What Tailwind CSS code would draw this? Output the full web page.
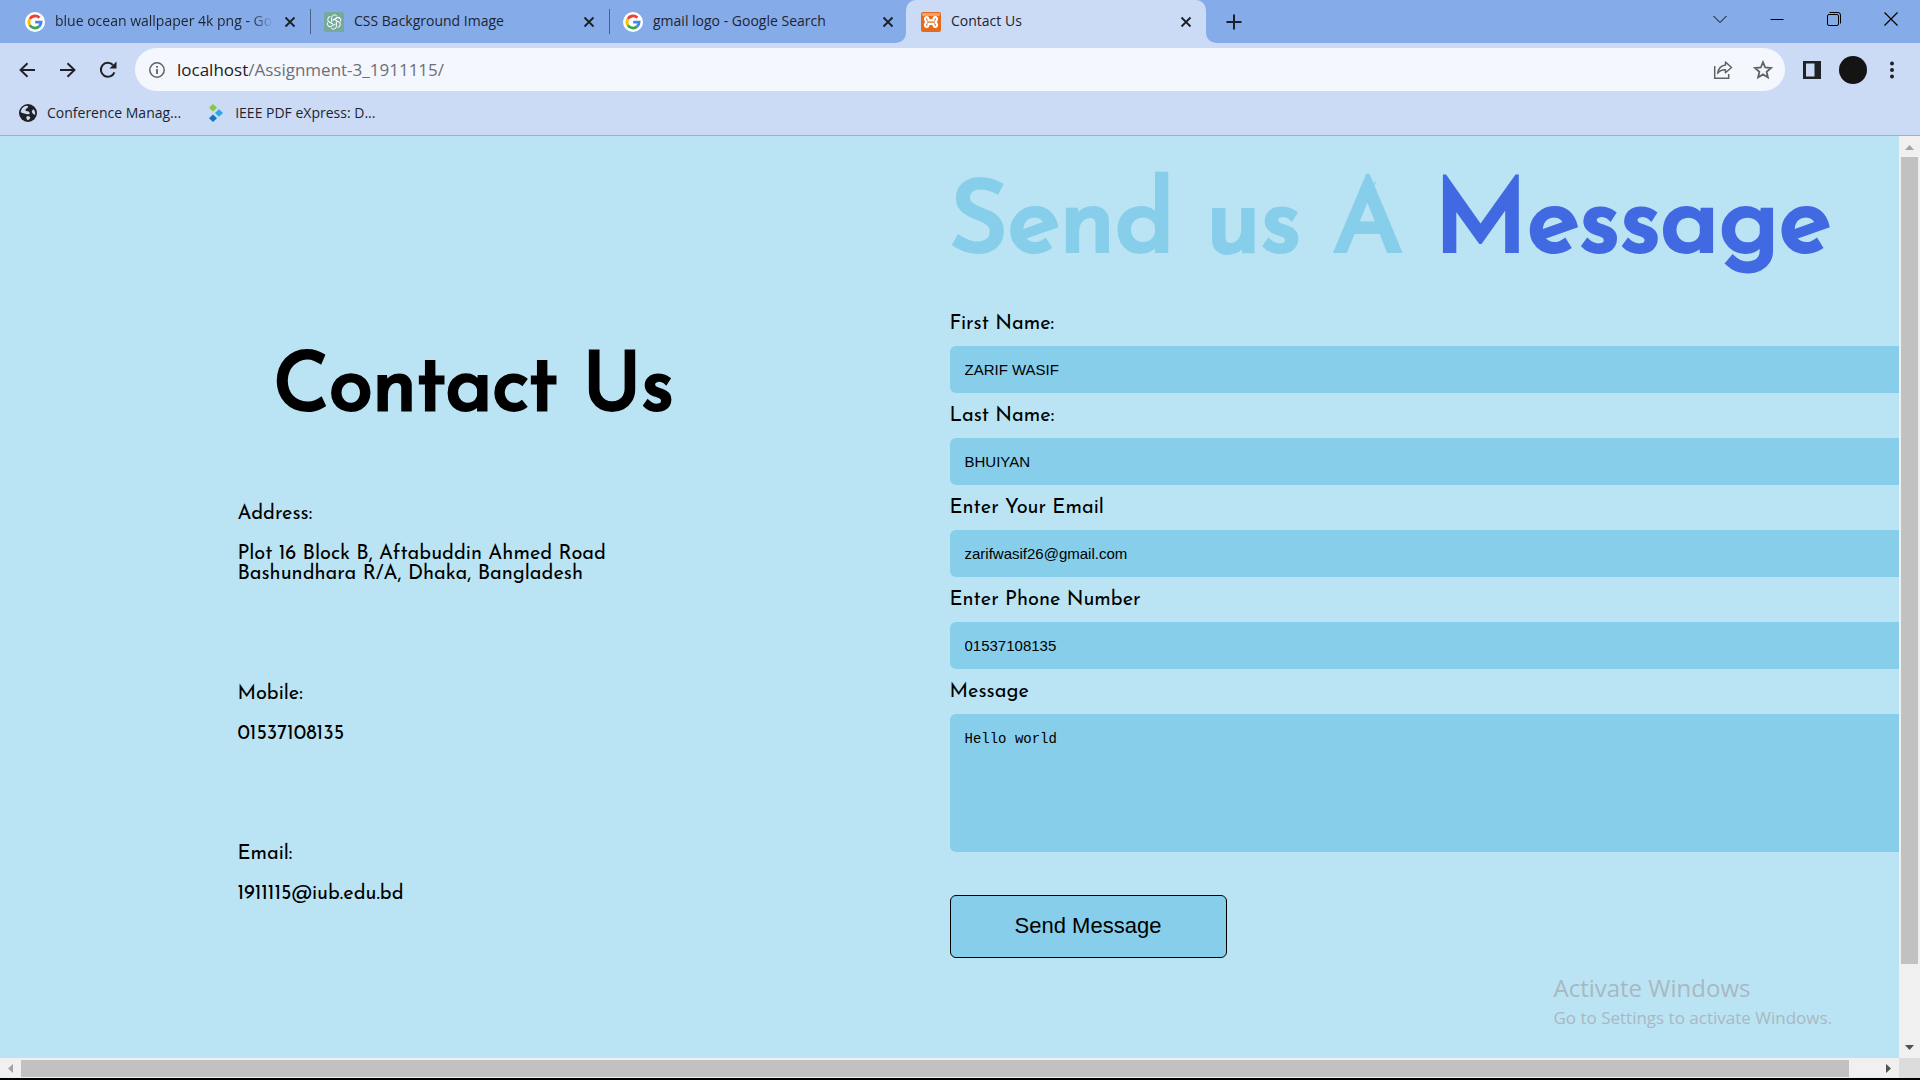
<!DOCTYPE html>
<html lang="en">
<head>
<meta charset="utf-8">
<meta name="viewport" content="width=device-width, initial-scale=1">
<title>Contact Us</title>
<script src="https://cdn.jsdelivr.net/npm/@tailwindcss/browser@4"></script>
</head>
<body class="flex h-screen flex-col overflow-hidden bg-black pb-0.5 font-['Open_Sans',sans-serif] text-[#1d2430]">
<svg class="hidden" aria-hidden="true">
  <symbol id="google" viewBox="0 0 20 20">
    <circle cx="10" cy="10" r="10" fill="#fff"/>
    <g fill="none" stroke-width="2.8">
      <path d="M14.4 5.8A6.1 6.1 0 0 0 4.8 6.9" stroke="#ea4335"/>
      <path d="M4.8 6.9A6.1 6.1 0 0 0 4.8 13.1" stroke="#fbbc05"/>
      <path d="M4.8 13.1A6.1 6.1 0 0 0 14 14.6" stroke="#34a853"/>
      <path d="M14 14.6A6.1 6.1 0 0 0 16.1 10.2H10.2" stroke="#4285f4"/>
    </g>
  </symbol>
  <symbol id="close" viewBox="0 0 12 12">
    <path d="M1.5 1.5l9 9M10.5 1.5l-9 9" stroke="#1d1f24" stroke-width="1.8" fill="none"/>
  </symbol>
</svg>

<header class="flex-none bg-[#cbdbf6]">
  <div class="flex h-[43px] bg-[#85abe9] pl-[11px] text-sm">
    <div class="flex w-[299px] items-center pl-3.5 pr-3.5">
      <svg class="size-5 flex-none"><use href="#google"/></svg>
      <span class="ml-2.5 w-[218px] flex-none overflow-hidden whitespace-nowrap mask-r-from-90% pb-0.5">blue ocean wallpaper 4k png - Google Search</span>
      <button class="ml-auto" aria-label="Close tab"><svg class="size-3"><use href="#close"/></svg></button>
    </div>
    <div class="relative flex w-[299px] items-center self-stretch pl-3.5 pr-3.5 before:absolute before:left-0 before:h-[25px] before:w-px before:bg-[#4c6187]">
      <svg class="size-5 flex-none" viewBox="0 0 20 20"><path d="M2 0h16a2 2 0 0 1 2 2v18H2a2 2 0 0 1-2-2V2a2 2 0 0 1 2-2z" fill="#75a99a"/>
        <g fill="none" stroke="#fff" stroke-width="1">
          <path d="M7.600 10.400V5.800a2.900 2.900 0 0 1 5.300-1.600M9 8.300l4.200-2.400a2.900 2.900 0 0 1 3 .3"/>
          <path d="M7.600 10.400V5.800a2.900 2.900 0 0 1 5.300-1.600" transform="rotate(60 10 10)"/>
          <path d="M7.600 10.400V5.800a2.900 2.900 0 0 1 5.300-1.600" transform="rotate(120 10 10)"/>
          <path d="M7.600 10.400V5.800a2.900 2.900 0 0 1 5.300-1.600" transform="rotate(180 10 10)"/>
          <path d="M7.600 10.400V5.800a2.900 2.900 0 0 1 5.300-1.600" transform="rotate(240 10 10)"/>
          <path d="M7.600 10.400V5.800a2.900 2.900 0 0 1 5.300-1.600" transform="rotate(300 10 10)"/>
        </g></svg>
      <span class="ml-2.5 pb-0.5">CSS Background Image</span>
      <button class="ml-auto" aria-label="Close tab"><svg class="size-3"><use href="#close"/></svg></button>
    </div>
    <div class="relative flex w-[297px] items-center pl-3.5 pr-3 before:absolute before:left-0 before:h-[25px] before:w-px before:bg-[#4c6187]">
      <svg class="size-5 flex-none"><use href="#google"/></svg>
      <span class="ml-2.5 pb-0.5">gmail logo - Google Search</span>
      <button class="ml-auto" aria-label="Close tab"><svg class="size-3"><use href="#close"/></svg></button>
      <svg class="absolute bottom-0 right-0 size-2.5" viewBox="0 0 10 10"><path d="M10 0v10H0A10 10 0 0 0 10 0z" fill="#cbdbf6"/></svg>
    </div>
    <div class="relative flex w-[300px] items-center rounded-t-[10px] bg-[#cbdbf6] pl-[15px] pr-3.5">
      <svg class="size-5 flex-none" viewBox="0 0 20 20"><rect width="20" height="20" rx="2" fill="#e66a1c"/><rect x="1" y="1" width="18" height="3" rx="1" fill="#f2a067"/>
        <path d="M7.600 8.400C7.600 3.600 3.600 4.600 4 7.400C4.200 8.900 5.400 9 5.400 10C5.400 11 4.200 11.100 4 12.600C3.600 15.400 7.600 16.400 7.600 11.800H12.400C12.400 16.400 16.400 15.400 16 12.600C15.800 11.100 14.600 11 14.600 10C14.600 9 15.800 8.900 16 7.400C16.400 4.600 12.400 3.600 12.400 8.400z" fill="none" stroke="#fff" stroke-width="2.200" stroke-linejoin="round"/></svg>
      <span class="ml-2.5 pb-0.5">Contact Us</span>
      <button class="ml-auto" aria-label="Close tab"><svg class="size-3"><use href="#close"/></svg></button>
      <svg class="absolute -right-2.5 bottom-0 size-2.5" viewBox="0 0 10 10"><path d="M0 0v10h10A10 10 0 0 1 0 0z" fill="#cbdbf6"/></svg>
    </div>
    <button class="ml-5 self-center" aria-label="New tab"><svg class="size-4" viewBox="0 0 16 16"><path d="M8 .5v15M.5 8h15" stroke="#1d1f24" stroke-width="2"/></svg></button>
    <div class="mr-px ml-auto flex h-[37px] items-center text-black">
      <button class="flex w-[57px] justify-center" aria-label="Search tabs"><svg class="size-3.5" viewBox="0 0 14 14"><path d="M.5 4L7 10.5 13.5 4" fill="none" stroke="currentColor"/></svg></button>
      <button class="flex w-[57px] justify-center" aria-label="Minimize"><svg class="size-3.5" viewBox="0 0 14 14"><path d="M.5 7.500h13" stroke="currentColor"/></svg></button>
      <button class="flex w-[57px] justify-center" aria-label="Restore"><svg class="size-3.5" viewBox="0 0 14 14"><g fill="none" stroke="currentColor"><rect x=".5" y="2.500" width="11" height="11" rx="1.500"/><path d="M2.500 .5H11a2.500 2.500 0 0 1 2.500 2.500v8.500"/></g></svg></button>
      <button class="flex w-[57px] justify-center" aria-label="Close"><svg class="size-3.5" viewBox="0 0 14 14"><path d="M.5 .5l13 13M13.500 .5l-13 13" stroke="currentColor" stroke-width="1.200"/></svg></button>
    </div>
  </div>

  <div class="mt-[5px] flex h-[43px] items-center pl-[18px] text-[#202124]">
    <button class="mr-5" aria-label="Back"><svg class="size-5" viewBox="0 0 20 20"><path d="M17 10H3M9.500 3.200L2.500 10l7 6.800" fill="none" stroke="currentColor" stroke-width="1.900"/></svg></button>
    <button class="mr-5" aria-label="Forward"><svg class="size-5" viewBox="0 0 20 20"><path d="M2 10h14M9.500 3.200l7 6.800-7 6.800" fill="none" stroke="currentColor" stroke-width="1.900"/></svg></button>
    <button class="mr-[17px]" aria-label="Reload"><svg class="size-5" viewBox="0 0 20 20"><path d="M16.400 12.300A7 7 0 1 1 15 5" fill="none" stroke="currentColor" stroke-width="2"/><path d="M18.500 1.500v7h-7z" fill="currentColor"/></svg></button>
    <div class="relative flex h-full flex-1 items-center rounded-full bg-[#f4f7fd] pl-3.5 pr-3">
      <svg class="size-4 flex-none" viewBox="0 0 16 16"><circle cx="8" cy="8" r="7.200" fill="none" stroke="#5f6368" stroke-width="1.500"/><path d="M8 7v5M8 4v1.800" stroke="#5f6368" stroke-width="1.800"/></svg>
      <a href="#" class="ml-3 text-[17px] text-[#6b7079]"><span class="text-[#202124]">localhost</span>/Assignment-3_1911115/</a>
      <button class="ml-auto mr-5 text-[#5f6368]" aria-label="Share"><svg class="size-5" viewBox="0 0 20 20"><path d="M1.700 6v12.200h14V14" fill="none" stroke="currentColor" stroke-width="1.500"/><path d="M12.500 2l6 5.500-6 5.200V9.800c-3.500 0-6 1-7.800 3.600C5.200 9 7.800 5.700 12.500 5z" fill="none" stroke="currentColor" stroke-width="1.500" stroke-linejoin="round"/></svg></button>
      <button class="text-[#5f6368]" aria-label="Bookmark this tab"><svg class="size-5" viewBox="0 0 20 20"><path d="M10 2.200l2.200 5.300 5.800.5-4.400 3.800 1.300 5.600L10 14.400l-4.900 3L6.400 11.800 2 8l5.800-.5z" fill="none" stroke="currentColor" stroke-width="1.800"/></svg></button>
    </div>
    <button class="ml-[18px]" aria-label="Side panel"><svg class="size-[18px]" viewBox="0 0 18 18"><path d="M0 0h18v18H0zM3 2.500v13h8.500v-13z" fill="currentColor" fill-rule="evenodd"/></svg></button>
    <button class="ml-[18px] size-7 rounded-full bg-[#141414]" aria-label="Profile"></button>
    <button class="ml-[15px] mr-[18px]" aria-label="Menu"><svg class="h-[18px] w-5" viewBox="0 0 20 18"><g fill="currentColor"><circle cx="10" cy="2.500" r="2"/><circle cx="10" cy="9" r="2"/><circle cx="10" cy="15.500" r="2"/></g></svg></button>
  </div>

  <nav class="flex h-[45px] items-center border-b border-[#9fafcd] pl-[19px] text-sm" aria-label="Bookmarks">
    <a href="#" class="flex items-center">
      <svg class="mr-2.5 size-[18px]" viewBox="0 0 18 18"><circle cx="9" cy="9" r="9" fill="#202124"/><path d="M8 1.800c2 .2 1 1.800 0 2.400S6 5.500 6.500 6.600s3.500.4 4 1.800-.8 2.200-2 1.800S3.500 9.500 1.800 8.200C2 4.800 4.600 2 8 1.800zM14.500 5.200c1.300 1.600 2 3.600 1.600 5.400-1 .4-2.200-.8-3-2s.2-2.400 1.400-3.400zM8 12.300c1.400-.4 3 0 3.200 1.200s-1 2.200-2.600 2.700c-1-.8-2-3.200-.6-3.900z" fill="#cbdbf6"/></svg>
      <span>Conference Manag...</span>
    </a>
    <a href="#" class="ml-[27px] flex items-center">
      <svg class="mr-3 h-[18px] w-[15px]" viewBox="0 0 15 18"><path d="M5 0l4 3.700-4 3.700L1 3.700z" fill="#8bc53f"/><path d="M11 5.300L15 9l-4 3.700L7 9z" fill="#27aae1"/><path d="M5 10.600l4 3.700L5 18l-4-3.700z" fill="#0f75bc"/></svg>
      <span>IEEE PDF eXpress: D...</span>
    </a>
  </nav>
</header>

<div class="flex min-h-0 flex-1">
  <main class="relative grid min-w-0 flex-1 grid-cols-2 overflow-hidden bg-[#bae4f4] font-['Josefin_Sans',Lato,sans-serif] text-xl text-black">
    <section class="pl-[25%] pt-[206px]">
      <h1 class="pl-9 text-[80px] leading-[96px] font-normal [-webkit-text-stroke:3px]">Contact Us</h1>
      <dl class="mt-[66px] leading-5">
        <dt class="mb-5">Address:</dt>
        <dd class="mb-[100px]">Plot 16 Block B, Aftabuddin Ahmed Road<br>Bashundhara R/A, Dhaka, Bangladesh</dd>
        <dt class="mb-5">Mobile:</dt>
        <dd class="mb-[100px]">01537108135</dd>
        <dt class="mb-5">Email:</dt>
        <dd>1911115@iub.edu.bd</dd>
      </dl>
    </section>
    <section class="pt-[30px]">
      <h2 class="mb-[26px] text-[100px] leading-[120px] font-normal whitespace-nowrap text-[#87ceeb] [-webkit-text-stroke:4px]">Send us A <span class="text-[#4169e1]">Message</span></h2>
      <form class="flex w-[calc(100%+40px)] flex-col leading-6">
        <label for="first">First Name:</label>
        <input id="first" type="text" value="ZARIF WASIF" class="mt-2.5 mb-[11px] h-[47px] rounded-md bg-[#87ceeb] px-[15px] font-['Liberation_Sans',sans-serif] text-[15px]">
        <label for="last">Last Name:</label>
        <input id="last" type="text" value="BHUIYAN" class="mt-2.5 mb-[11px] h-[47px] rounded-md bg-[#87ceeb] px-[15px] font-['Liberation_Sans',sans-serif] text-[15px]">
        <label for="email">Enter Your Email</label>
        <input id="email" type="email" value="zarifwasif26@gmail.com" class="mt-2.5 mb-[11px] h-[47px] rounded-md bg-[#87ceeb] px-[15px] font-['Liberation_Sans',sans-serif] text-[15px]">
        <label for="phone">Enter Phone Number</label>
        <input id="phone" type="tel" value="01537108135" class="mt-2.5 mb-[11px] h-[47px] rounded-md bg-[#87ceeb] px-[15px] font-['Liberation_Sans',sans-serif] text-[15px]">
        <label for="message">Message</label>
        <textarea id="message" class="mt-2.5 h-[138px] resize-none rounded-md bg-[#87ceeb] px-[15px] py-[13px] font-['Liberation_Mono',monospace] text-sm leading-6">Hello world</textarea>
        <button type="button" class="mt-[43px] h-[63px] w-[277px] rounded-md border border-black bg-[#87ceeb] pb-0.5 font-['Liberation_Sans',sans-serif] text-[22px]">Send Message</button>
      </form>
    </section>
    <aside class="absolute right-[67px] bottom-[26px] font-['Open_Sans',sans-serif] text-[#a9b8c0]">
      <p class="text-2xl leading-8">Activate Windows</p>
      <p class="text-[17px] leading-7">Go to Settings to activate Windows.</p>
    </aside>
  </main>
  <div class="flex w-[21px] flex-none flex-col items-center bg-[#f0f0f0]">
    <svg class="h-[21px] w-[17px]" viewBox="0 0 17 21"><path d="M4 14l4.500-5 4.500 5z" fill="#a3a3a3"/></svg>
    <div class="w-[17px] flex-1 bg-[#c1c1c1]"></div>
    <svg class="mt-[73px] h-[21px] w-[17px]" viewBox="0 0 17 21"><path d="M4 8l4.500 5 4.500-5z" fill="#505050"/></svg>
  </div>
</div>
<div class="flex h-5 flex-none bg-[#f0f0f0]">
  <svg class="h-5 w-[21px]" viewBox="0 0 21 20"><path d="M13 6v9l-5-4.500z" fill="#a3a3a3"/></svg>
  <div class="mt-0.5 h-[17px] flex-1 bg-[#c1c1c1]"></div>
  <svg class="ml-[29px] h-5 w-[21px]" viewBox="0 0 21 20"><path d="M8 6v9l5-4.500z" fill="#505050"/></svg>
  <div class="w-[21px] bg-[#dcdcdc]"></div>
</div>
</body>
</html>
